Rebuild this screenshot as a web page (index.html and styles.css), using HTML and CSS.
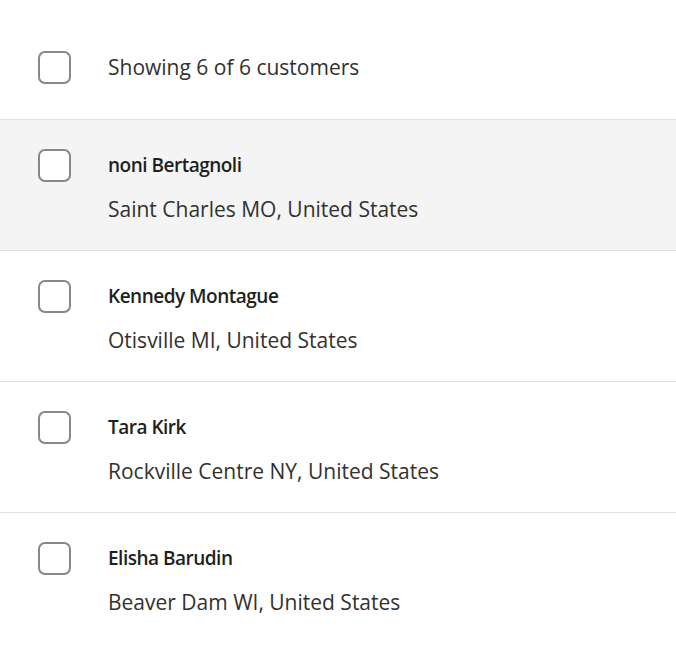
FILE: index.html
```html
<!DOCTYPE html>
<html lang="en">
<head>
    <meta charset="UTF-8">
    <meta name="viewport" content="width=device-width, initial-scale=1.0">
    <title>Customers</title>
    <link rel="stylesheet" href="styles.css">
</head>
<body>

    <div class="list-header">
        <span class="checkbox"></span>
        <p class="summary">Showing 6 of 6 customers</p>
    </div>

    <ul class="customer-list">
        <li class="customer selected">
            <span class="checkbox"></span>
            <div class="details">
                <p class="name">noni Bertagnoli</p>
                <p class="location">Saint Charles MO, United States</p>
            </div>
        </li>
        <li class="customer">
            <span class="checkbox"></span>
            <div class="details">
                <p class="name">Kennedy Montague</p>
                <p class="location">Otisville MI, United States</p>
            </div>
        </li>
        <li class="customer">
            <span class="checkbox"></span>
            <div class="details">
                <p class="name">Tara Kirk</p>
                <p class="location">Rockville Centre NY, United States</p>
            </div>
        </li>
        <li class="customer">
            <span class="checkbox"></span>
            <div class="details">
                <p class="name">Elisha Barudin</p>
                <p class="location">Beaver Dam WI, United States</p>
            </div>
        </li>
    </ul>

</body>
</html>
```

FILE: styles.css
```css
body {
    font-family: "Open Sans", "Noto Sans", sans-serif;
    margin: 0;
    padding: 0;
    background-color: #ffffff;
    color: #323130;
    overflow: hidden;
}

p {
    margin: 0;
}

.checkbox {
    display: block;
    flex: none;
    width: 33px;
    height: 33px;
    box-sizing: border-box;
    border: 2px solid #8a8886;
    border-radius: 7px;
    background-color: #ffffff;
}

.list-header {
    display: flex;
    align-items: flex-start;
    gap: 37px;
    height: 120px;
    box-sizing: border-box;
    padding: 51px 0 0 38px;
    border-bottom: 1px solid #e1dfdd;
}

.summary {
    font-size: 21px;
    line-height: 33px;
}

.customer-list {
    list-style: none;
    margin: 0;
    padding: 0;
}

.customer {
    display: flex;
    align-items: flex-start;
    gap: 37px;
    height: 131px;
    box-sizing: border-box;
    padding: 29px 0 0 38px;
    border-bottom: 1px solid #e1dfdd;
}

.customer:last-child {
    border-bottom: none;
}

.customer.selected {
    background-color: #f4f4f4;
}

.name {
    font-size: 19px;
    font-weight: 600;
    line-height: 32px;
    letter-spacing: -0.5px;
    color: #201f1e;
}

.location {
    font-size: 21px;
    line-height: 26px;
    margin-top: 15px;
}
```
